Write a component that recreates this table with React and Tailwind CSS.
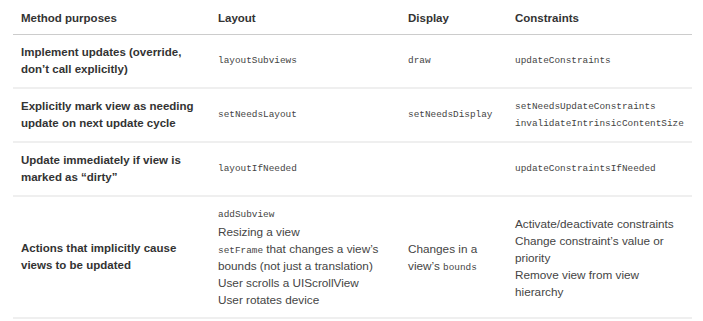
import React from "react";

const M = ({ children }) => (
  <span className="font-['Liberation_Mono',monospace] text-[9.4px] leading-[10px] text-[#444] align-baseline">{children}</span>
);

function Row({ cells }) {
  return (
    <div className="grid grid-cols-[197px_190px_107px_185px] border-b-2 border-[#efefef]">
      {cells.map((c, i) => (
        <div
          key={i}
          className={`flex flex-col justify-center px-2 py-[9px] ${i === 0 ? "font-bold text-[#333] text-[11.5px]" : "text-[#444]"}`}
        >
          {c}
        </div>
      ))}
    </div>
  );
}

export default function App() {
  return (
    <div className="w-[703px] h-[321px] bg-white pl-[13px] font-['Liberation_Sans',Arial,sans-serif] text-[11.75px] leading-[17px]">
      <div className="w-[679px]">
        <div className="grid grid-cols-[197px_190px_107px_185px] h-[35px] border-b border-[#cccccc] font-bold text-[11.5px] text-[#333] items-center pt-[2px]">
          <div className="px-2">Method purposes</div>
          <div className="px-2">Layout</div>
          <div className="px-2">Display</div>
          <div className="px-2">Constraints</div>
        </div>
        <Row
          cells={[
            <>
              <div>Implement updates (override,</div>
              <div>don’t call explicitly)</div>
            </>,
            <div className="h-[17px] flex items-center"><M>layoutSubviews</M></div>,
            <div className="h-[17px] flex items-center"><M>draw</M></div>,
            <div className="h-[17px] flex items-center"><M>updateConstraints</M></div>,
          ]}
        />
        <Row
          cells={[
            <>
              <div>Explicitly mark view as needing</div>
              <div>update on next update cycle</div>
            </>,
            <div className="h-[17px] flex items-center"><M>setNeedsLayout</M></div>,
            <div className="h-[17px] flex items-center"><M>setNeedsDisplay</M></div>,
            <>
              <div className="h-[17px] flex items-center"><M>setNeedsUpdateConstraints</M></div>
              <div className="h-[17px] flex items-center"><M>invalidateIntrinsicContentSize</M></div>
            </>,
          ]}
        />
        <Row
          cells={[
            <>
              <div>Update immediately if view is</div>
              <div>marked as “dirty”</div>
            </>,
            <div className="h-[17px] flex items-center"><M>layoutIfNeeded</M></div>,
            <span></span>,
            <div className="h-[17px] flex items-center"><M>updateConstraintsIfNeeded</M></div>,
          ]}
        />
        <Row
          cells={[
            <>
              <div>Actions that implicitly cause</div>
              <div>views to be updated</div>
            </>,
            <div className="whitespace-nowrap">
              <div className="h-[17px] flex items-center"><M>addSubview</M></div>
              <div className="h-[17px]">Resizing a view</div>
              <div className="h-[17px]"><M>setFrame</M> that changes a view’s</div>
              <div className="h-[17px]">bounds (not just a translation)</div>
              <div className="h-[17px]">User scrolls a UIScrollView</div>
              <div className="h-[17px]">User rotates device</div>
            </div>,
            <div className="whitespace-nowrap">
              <div className="h-[17px]">Changes in a</div>
              <div className="h-[17px]">view’s <M>bounds</M></div>
            </div>,
            <div className="whitespace-nowrap">
              <div className="h-[17px]">Activate/deactivate constraints</div>
              <div className="h-[17px]">Change constraint’s value or</div>
              <div className="h-[17px]">priority</div>
              <div className="h-[17px]">Remove view from view</div>
              <div className="h-[17px]">hierarchy</div>
            </div>,
          ]}
        />
      </div>
    </div>
  );
}
